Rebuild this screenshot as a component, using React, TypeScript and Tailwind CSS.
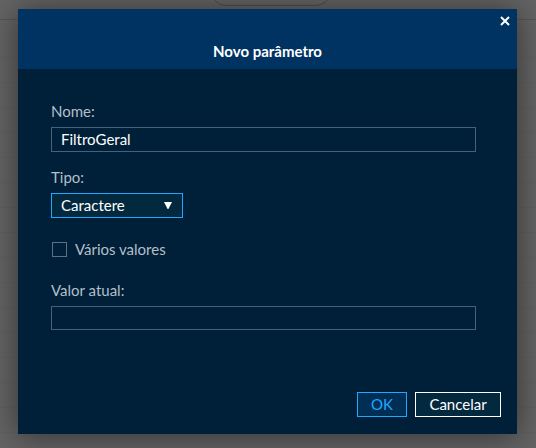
import { useState } from "react";

const label = "block text-[15px] leading-5 text-[#b3bfc9]";
const field =
  "block w-full border border-[#46617a] bg-transparent px-[9px] pb-[2px] text-[15px] leading-5 text-white outline-none";

function Backdrop() {
  return (
    <div aria-hidden="true" className="absolute inset-0 overflow-hidden bg-[#646464]">
      <div className="flex h-5 justify-center border-b border-[#575757] pl-[6px]">
        <div className="-mt-6 h-[30px] w-[120px] rounded-full border border-[#4c4c4c]" />
      </div>
      <div className="h-[38px] border-b border-[#616161]" />
      {Array.from({ length: 16 }, (_, i) => (
        <div key={i} className="h-[25px] border-b border-[#616161]" />
      ))}
    </div>
  );
}

export default function App() {
  const [name, setName] = useState("FiltroGeral");
  const [value, setValue] = useState("");

  return (
    <div className="relative min-h-screen pt-[9px] pr-[19px] pb-[14px] pl-[18px] font-[Lato,sans-serif]">
      <Backdrop />
      <form
        role="dialog"
        aria-labelledby="title"
        onSubmit={(e) => e.preventDefault()}
        className="relative bg-[#001f38] shadow-[0_2px_30px_rgba(0,0,0,0.5)]"
      >
        <header className="relative flex h-[60px] items-end justify-center bg-[#003361] pb-2">
          <h1 id="title" className="text-[15px] leading-5 font-bold text-white">
            Novo parâmetro
          </h1>
          <button
            type="button"
            aria-label="Fechar"
            className="absolute top-[6px] right-[6px] flex size-3 items-center justify-center text-white"
          >
            <svg viewBox="0 0 12 12" className="size-3" fill="none" stroke="currentColor" strokeWidth="2">
              <path d="M2 2l8 8M10 2l-8 8" />
            </svg>
          </button>
        </header>

        <div className="pt-8 pr-[41px] pl-[33px]">
          <label htmlFor="name" className={label}>
            Nome:
          </label>
          <input
            id="name"
            value={name}
            onChange={(e) => setName(e.target.value)}
            className={`${field} mt-[6px] h-[25px]`}
          />

          <label htmlFor="type" className={`${label} mt-[15px]`}>
            Tipo:
          </label>
          <div className="relative mt-[6px] w-[132px]">
            <select
              id="type"
              className="block h-[25px] w-full appearance-none border border-[#22a7ff] bg-[#03293f] px-[9px] pb-[2px] text-[15px] leading-5 text-white outline-none"
            >
              <option>Caractere</option>
              <option>Número</option>
              <option>Data</option>
            </select>
            <svg
              viewBox="0 0 8 7"
              className="pointer-events-none absolute top-[9px] right-[11px] h-[7px] w-2 fill-white"
            >
              <path d="M0 0h8L4.4 7h-.8z" />
            </svg>
          </div>

          <label className="mt-[21px] flex items-center gap-2 pl-px text-[15px] leading-5 text-[#b3bfc9]">
            <input
              type="checkbox"
              className="size-[15px] appearance-none border border-[#5d7183] checked:bg-[#22a7ff]"
            />
            Vários valores
          </label>

          <label htmlFor="value" className={`${label} mt-[21px]`}>
            Valor atual:
          </label>
          <input
            id="value"
            value={value}
            onChange={(e) => setValue(e.target.value)}
            className={`${field} mt-[6px] h-6`}
          />
        </div>

        <footer className="mt-[62px] flex justify-end gap-2 pr-4 pb-[17px]">
          <button
            type="submit"
            className="h-[25px] w-[50px] border border-[#22a7ff] bg-[#002e54] pb-[2px] text-[15px] leading-5 text-[#22a7ff]"
          >
            OK
          </button>
          <button
            type="button"
            className="h-[25px] w-[86px] border border-white bg-[#03293f] pb-[2px] text-[15px] leading-5 text-white"
          >
            Cancelar
          </button>
        </footer>
      </form>
    </div>
  );
}
